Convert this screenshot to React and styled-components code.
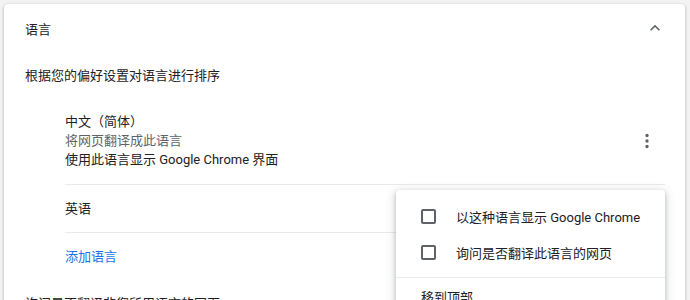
import React from 'react'
import styled, { createGlobalStyle } from 'styled-components'

const GlobalStyle = createGlobalStyle`
  html, body {
    margin: 0;
    padding: 0;
    overflow: hidden;
    background: #f3f3f3;
    font-family: Roboto, "Noto Sans CJK SC", sans-serif;
    font-size: 13px;
    color: #202124;
  }
`

const Page = styled.div`
  padding: 4px 5px 0 4px;
`

const Card = styled.section`
  background: #fff;
  border-radius: 4px;
  box-shadow: 0 1px 2px rgba(60, 64, 67, 0.3), 0 1px 3px 1px rgba(60, 64, 67, 0.12);
  height: 340px;
`

const Header = styled.div`
  display: flex;
  align-items: center;
  justify-content: space-between;
  height: 48px;
  padding: 0 20px 0 21px;
`

const IconButton = styled.span`
  display: flex;
  align-items: center;
  justify-content: center;
  width: 20px;
  height: 20px;
  color: #5f6368;
`

const Row = styled.div`
  display: flex;
  align-items: center;
  height: ${p => p.h || 46}px;
  padding-left: 21px;
  line-height: 19px;
`

const List = styled.div`
  position: relative;
  margin: 0 20px 0 61px;
`

const Item = styled.div`
  display: flex;
  align-items: center;
  justify-content: space-between;
  padding: ${p => (p.tall ? '14px 0 15px' : '0')};
  height: ${p => (p.tall ? 'auto' : '48px')};
  border-top: ${p => (p.first ? 'none' : '1px solid #e8eaed')};
  line-height: 19px;
  box-sizing: border-box;
`

const Lines = styled.div`
  display: flex;
  flex-direction: column;
`

const Secondary = styled.span`
  color: #5f6368;
`

const Link = styled.span`
  color: #1a73e8;
`

const DotsButton = styled(IconButton)`
  width: 22px;
  height: 22px;
  margin-right: 7px;
`

const Menu = styled.div`
  position: absolute;
  top: 92px;
  right: 0;
  width: 269px;
  background: #fff;
  border-radius: 4px;
  box-shadow: 0 2px 4px rgba(60, 64, 67, 0.3), 0 2px 10px 2px rgba(60, 64, 67, 0.15);
  padding: 8px 0;
`

const MenuItem = styled.div`
  display: flex;
  align-items: center;
  height: 36px;
  padding-left: 25px;
  gap: 20px;
`

const MenuDivider = styled.div`
  height: 1px;
  background: #e8eaed;
  margin: 7px 0 0;
`

const Box = styled.span`
  width: 11px;
  height: 11px;
  border: 2px solid #5f6368;
  border-radius: 2px;
`

const ChevronUp = () => (
  <svg width="20" height="20" viewBox="0 0 24 24" fill="currentColor">
    <path d="M12 8l-6 6 1.41 1.41L12 10.83l4.59 4.58L18 14z" />
  </svg>
)

const MoreVert = () => (
  <svg width="22" height="22" viewBox="0 0 24 24" fill="currentColor">
    <circle cx="12" cy="6" r="1.8" />
    <circle cx="12" cy="12" r="1.8" />
    <circle cx="12" cy="18" r="1.8" />
  </svg>
)

const App = () => {
  return (
    <Page>
      <GlobalStyle />
      <Card>
        <Header>
          <span>语言</span>
          <IconButton><ChevronUp /></IconButton>
        </Header>
        <Row>根据您的偏好设置对语言进行排序</Row>
        <List>
          <Item first tall>
            <Lines>
              <span>中文（简体）</span>
              <Secondary>将网页翻译成此语言</Secondary>
              <span>使用此语言显示 Google Chrome 界面</span>
            </Lines>
            <DotsButton><MoreVert /></DotsButton>
          </Item>
          <Item>英语</Item>
          <Item><Link>添加语言</Link></Item>
          <Menu>
            <MenuItem><Box />以这种语言显示 Google Chrome</MenuItem>
            <MenuItem><Box />询问是否翻译此语言的网页</MenuItem>
            <MenuDivider />
            <MenuItem>移到顶部</MenuItem>
          </Menu>
        </List>
        <Row h={46}>询问是否翻译非您所用语言的网页</Row>
      </Card>
    </Page>
  )
}

export default App
